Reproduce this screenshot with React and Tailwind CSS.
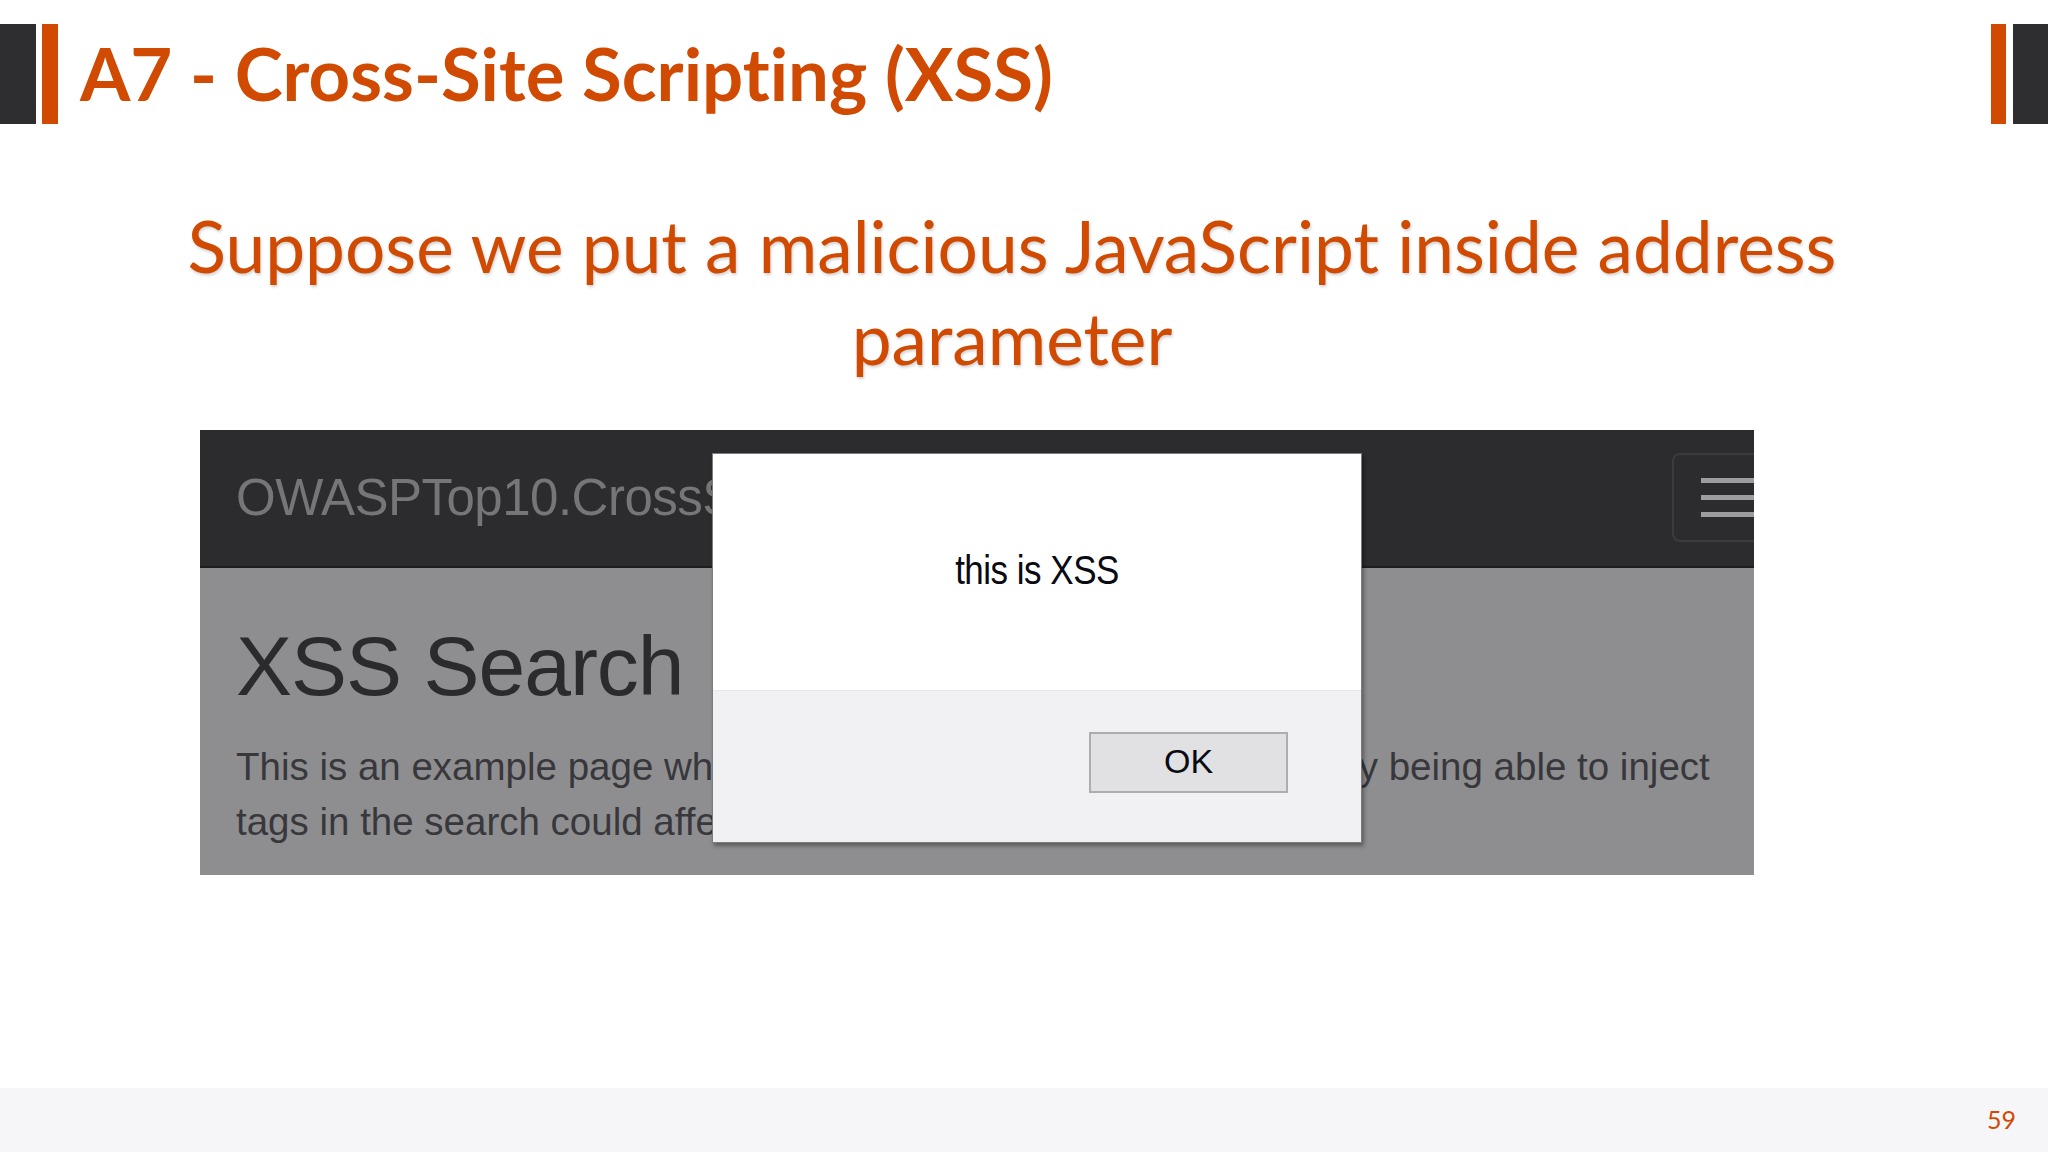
import React from "react";

const ORANGE = "bg-[#d04a02]";

function Hamburger() {
  return (
    <div className="absolute left-[1472px] top-[23px] w-[110px] h-[89px] rounded-[8px] border-2 border-[#3b3b3d] flex flex-col justify-center gap-[12px] pl-[27px]">
      <div className="h-[5px] w-[60px] bg-[#9d9d9f]" />
      <div className="h-[5px] w-[60px] bg-[#9d9d9f]" />
      <div className="h-[5px] w-[60px] bg-[#9d9d9f]" />
    </div>
  );
}

function AlertDialog() {
  return (
    <div className="absolute left-[512px] top-[23px] w-[650px] h-[390px] bg-white border border-[#7c7c7e] shadow-[2px_3px_4px_rgba(0,0,0,0.35)] flex flex-col font-['Liberation_Sans',Arial,sans-serif]">
      <div className="h-[236px] flex items-center justify-center pb-[4px]">
        <span className="text-[35px] text-[#0a0a12] tracking-[-0.5px] scale-y-[1.15]">this is XSS</span>
      </div>
      <div className="flex-1 bg-[#f1f0f3] border-t border-[#e6e6e8] flex justify-end pt-[41px] pr-[73px]">
        <button className="w-[199px] h-[61px] bg-[#e1e1e3] border-2 border-[#adadaf] text-[34px] text-[#0a0a12] leading-none pb-[3px]">
          OK
        </button>
      </div>
    </div>
  );
}

function BrowserShot() {
  return (
    <div className="relative ml-[200px] mt-[46px] w-[1554px] h-[445px] overflow-hidden font-['Liberation_Sans',Arial,sans-serif]">
      {/* dark navbar */}
      <div className="h-[138px] bg-[#2c2c2e] border-b-2 border-[#1e1e20] flex items-center pl-[36px]">
        <span className="text-[51px] text-[#767678] tracking-[-0.5px] whitespace-nowrap">
          OWASPTop10.CrossS<span className="invisible">iteScripting</span>
        </span>
      </div>

      {/* dimmed page body, mostly covered by the alert */}
      <div className="h-[307px] bg-[#8e8e90] pl-[36px] pt-[56px]">
        <h1 className="text-[84px] leading-none text-[#2b2b2e] tracking-[-1px]">XSS Search</h1>
        <p className="mt-[31px] w-[1500px] text-[38.5px] leading-[55px] text-[#38383c]">
          This is an example page wh<span className="invisible">ich demonstrates how, in reality, simpl</span>y being able to inject
          <br />
          tags in the search could affe<span className="invisible">ct the rendered page.</span>
        </p>
      </div>

      <Hamburger />
      <AlertDialog />
    </div>
  );
}

export default function App() {
  return (
    <div className="w-[2048px] h-[1152px] bg-white flex flex-col overflow-hidden font-['Lato','Noto_Sans',sans-serif] [font-variant-ligatures:none]">
      {/* title bar with side accents */}
      <div className="mt-[24px] h-[100px] flex items-stretch">
        <div className="w-[36px] bg-[#2e2e30]" />
        <div className={`w-[16px] ml-[6px] ${ORANGE}`} />
        <h1 className="ml-[22px] self-center text-[72.5px] font-bold text-[#d04a02] leading-none whitespace-nowrap pb-[2px]">
          A7 - Cross-Site Scripting (XSS)
        </h1>
        <div className="flex-1" />
        <div className={`w-[15px] ${ORANGE}`} />
        <div className="w-[35px] ml-[7px] bg-[#2e2e30]" />
      </div>

      <div className="mt-[76px] pr-[24px] text-center text-[71.2px] leading-[92px] text-[#d04a02] [text-shadow:1px_2px_3px_rgba(0,0,0,0.18)]">
        <p>Suppose we put a malicious JavaScript inside address</p>
        <p>parameter</p>
      </div>

      <BrowserShot />

      <div className="flex-1" />

      <footer className="h-[64px] bg-[#f6f5f8] flex items-center justify-end pr-[32px]">
        <span className="text-[25px] text-[#d04a02]">59</span>
      </footer>
    </div>
  );
}
